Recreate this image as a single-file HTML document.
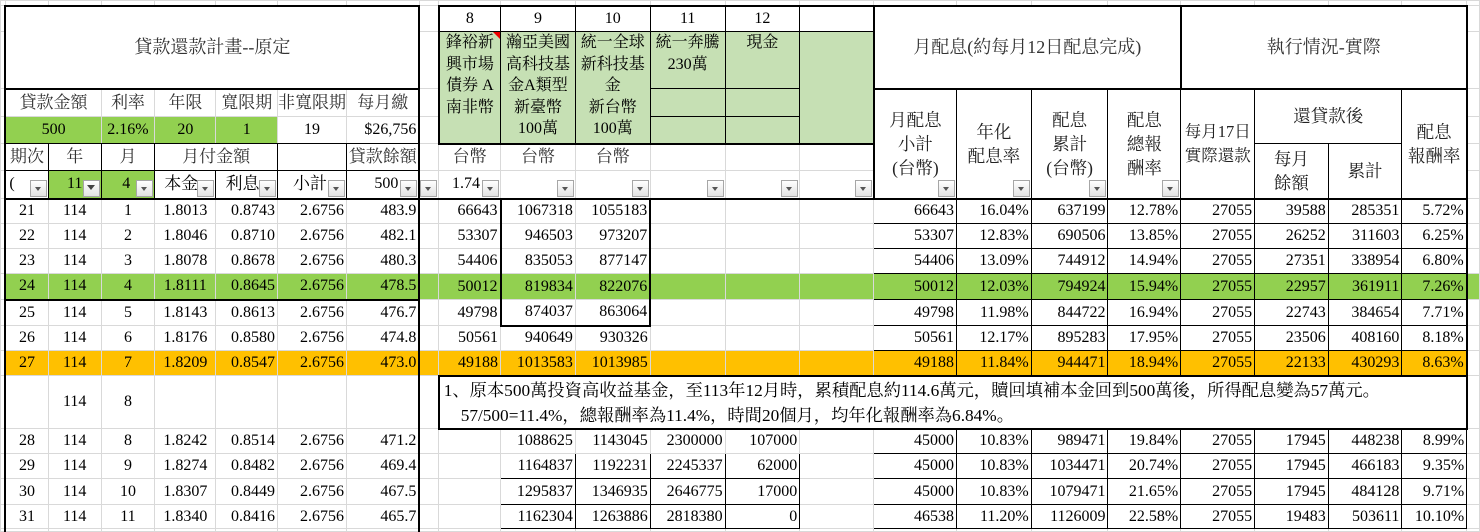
<!DOCTYPE html>
<html><head><meta charset="utf-8">
<style>
html,body{margin:0;padding:0;background:#fff;width:1480px;height:532px;overflow:hidden}
table{border-collapse:collapse;table-layout:fixed;font-family:"Liberation Serif","Noto Serif CJK SC",serif;font-size:16px;color:#000;position:absolute;left:0;top:0}
td{border:1px solid #d9d9d9;padding:0 2px 0 0;white-space:nowrap;overflow:hidden;vertical-align:middle;position:relative;text-align:right;line-height:18px}
.c{text-align:center;padding:0}
.z{font-size:17px}
.l{text-align:left}
.k{border:1px solid #000}
.g{background:#92d050}
.lg{background:#c6e0b4}
.o{background:#ffc000}
.t{vertical-align:top;text-align:center;line-height:21.5px;padding:0}
.h{text-align:center;line-height:24px;padding:0;color:#222;font-size:17.5px}
.f{position:absolute;right:1px;bottom:1px;width:17px;height:17px;border:1px solid #a6a6a6;background:linear-gradient(#fff,#e2e2e2);box-sizing:border-box}
.f::after{content:"";position:absolute;left:4px;top:6px;border-left:3.5px solid transparent;border-right:3.5px solid transparent;border-top:4px solid #555}
.ff::after{left:3px;top:4px;border-left:4.5px solid transparent;border-right:4.5px solid transparent;border-top:5px solid #444}
.red::after{content:"";position:absolute;right:0;top:0;border-left:7px solid transparent;border-top:7px solid #e00}
.TL{border-left:2px solid #000}.TR{border-right:2px solid #000}.TT{border-top:2px solid #000}.TB{border-bottom:2px solid #000}
</style></head><body>
<table>
<colgroup>
<col style="width:5px"><col style="width:43px"><col style="width:54px"><col style="width:54px"><col style="width:62px"><col style="width:62px"><col style="width:62px"><col style="width:73px"><col style="width:20px"><col style="width:62px"><col style="width:75px"><col style="width:75px"><col style="width:75px"><col style="width:75px"><col style="width:75px"><col style="width:83px"><col style="width:75px"><col style="width:77px"><col style="width:73px"><col style="width:74px"><col style="width:74px"><col style="width:74px"><col style="width:65px"><col style="width:13px">
</colgroup>
<tr style="height:5px"><td></td><td></td><td></td><td></td><td></td><td></td><td></td><td></td><td></td><td></td><td></td><td></td><td></td><td></td><td></td><td></td><td></td><td></td><td></td><td></td><td></td><td></td><td></td><td></td></tr>
<tr style="height:26px"><td></td>
<td colspan="7" rowspan="2" class="c z TL TR TT TB" style="color:#333;font-size:18px">貸款還款計畫--原定</td>
<td></td>
<td class="c k TT TL">8</td><td class="c k TT">9</td><td class="c k TT">10</td><td class="c k TT">11</td><td class="c k TT">12</td><td class="c k TT TR"></td>
<td colspan="4" rowspan="2" class="c TL TR TT TB" style="color:#333;font-size:18px">月配息(約每月12日配息完成)</td>
<td colspan="4" rowspan="2" class="c TL TR TT TB" style="color:#333;font-size:18px">執行情況-實際</td>
<td></td></tr>
<tr style="height:57px"><td></td><td></td>
<td rowspan="3" class="t k lg TL TB red">鋒裕新<br>興市場<br>債券 A<br>南非幣</td>
<td rowspan="3" class="t k lg TB">瀚亞美國<br>高科技基<br>金A類型<br>新臺幣<br>100萬</td>
<td rowspan="3" class="t k lg TB">統一全球<br>新科技基<br>金<br>新台幣<br>100萬</td>
<td class="t k lg">統一奔騰<br>230萬</td>
<td class="t k lg">現金</td>
<td rowspan="3" class="k lg TR TB"></td>
<td></td></tr>
<tr style="height:28px"><td></td>
<td colspan="2" class="c z TL" style="color:#333">貸款金額</td><td class="c z" style="color:#333">利率</td><td class="c z" style="color:#333">年限</td><td class="c z" style="color:#333">寬限期</td><td class="c z" style="color:#333;text-align:left">非寬限期</td><td class="c z TR" style="color:#333">每月繳</td>
<td></td>
<td class="k lg"></td><td class="k lg"></td>
<td rowspan="4" class="h k TL TB">月配息<br>小計<br>(台幣)<span class="f"></span></td>
<td rowspan="4" class="h k TB">年化<br>配息率<span class="f"></span></td>
<td rowspan="4" class="h k TB">配息<br>累計<br>(台幣)<span class="f"></span></td>
<td rowspan="4" class="h k TB">配息<br>總報<br>酬率<span class="f"></span></td>
<td rowspan="4" class="h k TB" style="font-size:16.5px">每月17日<br>實際還款</td>
<td colspan="2" rowspan="2" class="h k">還貸款後</td>
<td rowspan="4" class="h k TR TB">配息<br>報酬率</td>
<td></td></tr>
<tr style="height:27px"><td></td>
<td colspan="2" class="c g TL" style="border-bottom:1px solid #000">500</td><td class="c g" style="border-bottom:1px solid #000">2.16%</td><td class="c g" style="border-bottom:1px solid #000">20</td><td class="c g" style="border-bottom:1px solid #000">1</td><td class="c" style="border-bottom:1px solid #000">19</td><td class="TR" style="border-bottom:1px solid #000">$26,756</td>
<td></td>
<td class="k lg"></td><td class="k lg"></td>
<td></td></tr>
<tr style="height:27px"><td></td>
<td class="c z k TL" style="color:#333">期次</td><td class="c z k" style="color:#333">年</td><td class="c z k" style="color:#333">月</td><td colspan="2" class="c z k" style="color:#333">月付金額</td><td class="k"></td><td class="c z k TR" style="color:#333">貸款餘額</td>
<td></td>
<td class="c z TT" style="color:#333">台幣</td><td class="c z TT" style="color:#333">台幣</td><td class="c z TT" style="color:#333">台幣</td><td class="TT"></td><td class="TT"></td><td class="TT"></td>
<td rowspan="2" class="h k">每月<br>餘額</td><td rowspan="2" class="h k">累計</td>
<td></td></tr>
<tr style="height:28px"><td></td>
<td class="k TL TB l" style="padding-left:3px">(<span class="f"></span></td><td class="c k g TB">11<span class="f ff"></span></td><td class="k g TB" style="padding-right:24px">4<span class="f"></span></td><td class="k z TB l" style="padding-left:9px">本金<span class="f"></span></td><td class="k z TB l" style="padding-left:9px">利息<span class="f"></span></td><td class="k z TB l" style="padding-left:15px">小計<span class="f"></span></td><td class="k TB TR" style="padding-right:20px">500<span class="f"></span></td>
<td class="TB"><span class="f"></span></td>
<td class="TB" style="padding-right:20px">1.74<span class="f"></span></td><td class="TB"><span class="f"></span></td><td class="TB"><span class="f"></span></td><td class="TB"><span class="f"></span></td><td class="TB"><span class="f"></span></td><td class="TB"><span class="f"></span></td>
<td></td></tr>

<tr style="height:25px"><td></td><td class="c TL TT">21</td><td class="c TT">114</td><td class="c TT">1</td><td class="c TT">1.8013</td><td class="TT">0.8743</td><td class="TT">2.6756</td><td class="TR TT">483.9</td><td class="TT"></td><td class="TT">66643</td><td class="TL TT">1067318</td><td class="TR TT">1055183</td><td class="TT"></td><td class="TT"></td><td class="TT"></td><td class="k TT">66643</td><td class="k TT">16.04%</td><td class="k TT">637199</td><td class="k TT">12.78%</td><td class="k TT">27055</td><td class="k TT">39588</td><td class="k TT">285351</td><td class="k TT TR">5.72%</td><td></td></tr>
<tr style="height:25px"><td></td><td class="c TL">22</td><td class="c">114</td><td class="c">2</td><td class="c">1.8046</td><td>0.8710</td><td>2.6756</td><td class="TR">482.1</td><td></td><td>53307</td><td class="TL">946503</td><td class="TR">973207</td><td></td><td></td><td></td><td class="k">53307</td><td class="k">12.83%</td><td class="k">690506</td><td class="k">13.85%</td><td class="k">27055</td><td class="k">26252</td><td class="k">311603</td><td class="k TR">6.25%</td><td></td></tr>
<tr style="height:25px"><td></td><td class="c TL">23</td><td class="c">114</td><td class="c">3</td><td class="c">1.8078</td><td>0.8678</td><td>2.6756</td><td class="TR">480.3</td><td></td><td>54406</td><td class="TL">835053</td><td class="TR">877147</td><td></td><td></td><td></td><td class="k">54406</td><td class="k">13.09%</td><td class="k">744912</td><td class="k">14.94%</td><td class="k">27055</td><td class="k">27351</td><td class="k">338954</td><td class="k TR">6.80%</td><td></td></tr>
<tr style="height:26px" class="g"><td style="background:#fff"></td><td class="c TL TB">24</td><td class="c TB">114</td><td class="c TB">4</td><td class="c TB">1.8111</td><td class="TB">0.8645</td><td class="TB">2.6756</td><td class="TR TB">478.5</td><td></td><td>50012</td><td class="TL">819834</td><td class="TR">822076</td><td></td><td></td><td></td><td class="k">50012</td><td class="k">12.03%</td><td class="k">794924</td><td class="k">15.94%</td><td class="k">27055</td><td class="k">22957</td><td class="k">361911</td><td class="k TR">7.26%</td><td></td></tr>
<tr style="height:26px"><td></td><td class="c TL">25</td><td class="c">114</td><td class="c">5</td><td class="c">1.8143</td><td>0.8613</td><td>2.6756</td><td class="TR">476.7</td><td></td><td>49798</td><td class="TL TB">874037</td><td class="TR TB">863064</td><td></td><td></td><td></td><td class="k">49798</td><td class="k">11.98%</td><td class="k">844722</td><td class="k">16.94%</td><td class="k">27055</td><td class="k">22743</td><td class="k">384654</td><td class="k TR">7.71%</td><td></td></tr>
<tr style="height:25px"><td></td><td class="c TL">26</td><td class="c">114</td><td class="c">6</td><td class="c">1.8176</td><td>0.8580</td><td>2.6756</td><td class="TR">474.8</td><td></td><td>50561</td><td>940649</td><td>930326</td><td></td><td></td><td></td><td class="k">50561</td><td class="k">12.17%</td><td class="k">895283</td><td class="k">17.95%</td><td class="k">27055</td><td class="k">23506</td><td class="k">408160</td><td class="k TR">8.18%</td><td></td></tr>
<tr style="height:25px" class="o"><td style="background:#fff"></td><td class="c TL">27</td><td class="c">114</td><td class="c">7</td><td class="c">1.8209</td><td>0.8547</td><td>2.6756</td><td class="TR">473.0</td><td></td><td>49188</td><td>1013583</td><td>1013985</td><td></td><td></td><td></td><td class="k TB">49188</td><td class="k TB">11.84%</td><td class="k TB">944471</td><td class="k TB">18.94%</td><td class="k TB">27055</td><td class="k TB">22133</td><td class="k TB">430293</td><td class="k TB TR">8.63%</td><td style="background:#fff"></td></tr>
<tr style="height:52px"><td></td><td class="TL"></td><td class="c">114</td><td class="c">8</td><td></td><td></td><td></td><td class="TR"></td><td></td>
<td colspan="14" class="l TL TR TT TB" style="line-height:25px;padding-left:4px;vertical-align:top;padding-top:1px;font-size:17.3px">1、原本500萬投資高收益基金，至113年12月時，累積配息約114.6萬元，贖回填補本金回到500萬後，所得配息變為57萬元。<br><span style="padding-left:17px">57/500=11.4%，總報酬率為11.4%，時間20個月，均年化報酬率為6.84%。</span></td><td></td></tr>
<tr style="height:25px"><td></td><td class="c TL">28</td><td class="c">114</td><td class="c">8</td><td class="c">1.8242</td><td>0.8514</td><td>2.6756</td><td class="TR">471.2</td><td></td><td></td><td>1088625</td><td>1143045</td><td>2300000</td><td>107000</td><td></td><td class="k">45000</td><td class="k">10.83%</td><td class="k">989471</td><td class="k">19.84%</td><td class="k">27055</td><td class="k">17945</td><td class="k">448238</td><td class="k">8.99%</td><td></td></tr>
<tr style="height:25px"><td></td><td class="c TL">29</td><td class="c">114</td><td class="c">9</td><td class="c">1.8274</td><td>0.8482</td><td>2.6756</td><td class="TR">469.4</td><td></td><td></td><td class="k">1164837</td><td class="k">1192231</td><td class="k">2245337</td><td class="k">62000</td><td></td><td class="k">45000</td><td class="k">10.83%</td><td class="k">1034471</td><td class="k">20.74%</td><td class="k">27055</td><td class="k">17945</td><td class="k">466183</td><td class="k">9.35%</td><td></td></tr>
<tr style="height:26px"><td></td><td class="c TL">30</td><td class="c">114</td><td class="c">10</td><td class="c">1.8307</td><td>0.8449</td><td>2.6756</td><td class="TR">467.5</td><td></td><td></td><td class="k">1295837</td><td class="k">1346935</td><td class="k">2646775</td><td class="k">17000</td><td></td><td class="k">45000</td><td class="k">10.83%</td><td class="k">1079471</td><td class="k">21.65%</td><td class="k">27055</td><td class="k">17945</td><td class="k">484128</td><td class="k">9.71%</td><td></td></tr>
<tr style="height:24px"><td></td><td class="c TL">31</td><td class="c">114</td><td class="c">11</td><td class="c">1.8340</td><td>0.8416</td><td>2.6756</td><td class="TR">465.7</td><td></td><td></td><td class="k">1162304</td><td class="k">1263886</td><td class="k">2818380</td><td class="k">0</td><td></td><td class="k">46538</td><td class="k">11.20%</td><td class="k">1126009</td><td class="k">22.58%</td><td class="k">27055</td><td class="k">19483</td><td class="k">503611</td><td class="k">10.10%</td><td></td></tr>
<tr style="height:3px"><td></td><td class="TL"></td><td></td><td></td><td></td><td></td><td></td><td class="TR"></td><td></td><td></td><td></td><td></td><td></td><td></td><td></td><td></td><td></td><td></td><td></td><td></td><td></td><td></td><td></td><td></td></tr>
</table>
</body></html>
